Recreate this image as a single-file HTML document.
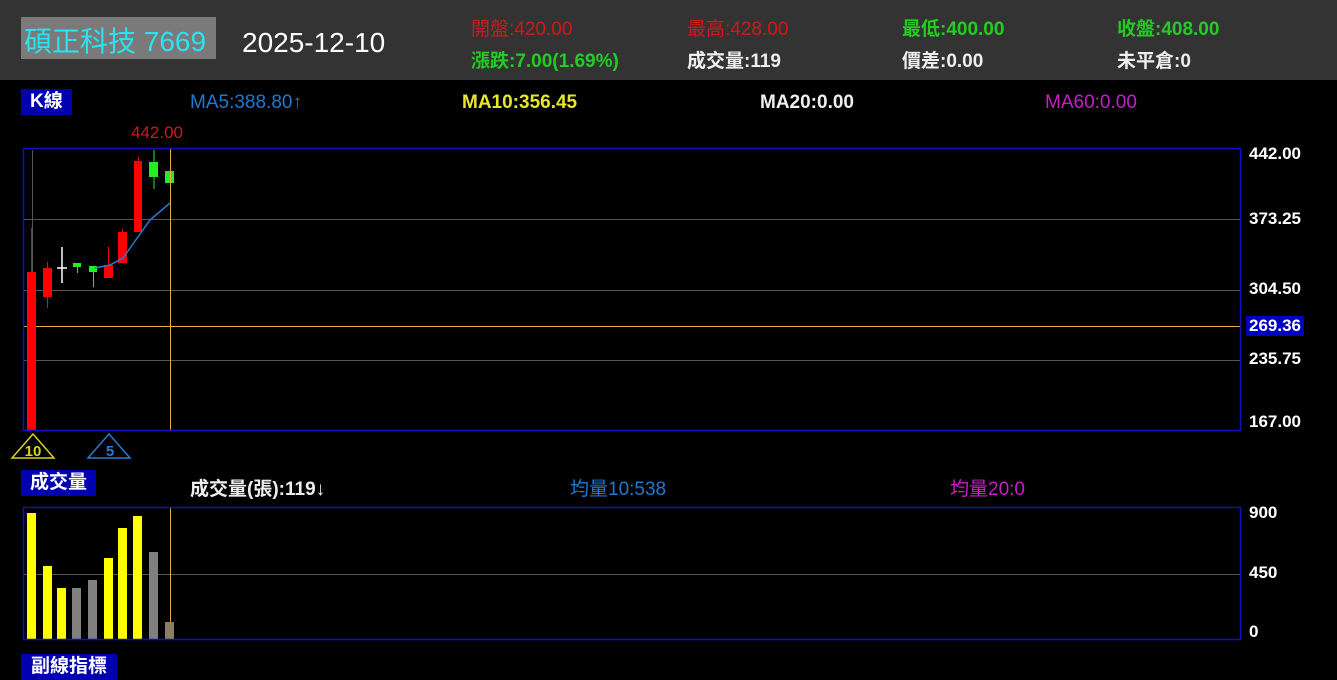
<!DOCTYPE html>
<html><head><meta charset="utf-8"><style>
body{margin:0;width:1337px;height:662px;background:#000;overflow:hidden;position:relative;font-family:"Liberation Sans","Noto Sans CJK TC",sans-serif}
.a{position:absolute;white-space:nowrap}
.hdr{position:absolute;left:0;top:0;width:1337px;height:80px;background:#333}
.s{font-size:19px}
.b{font-weight:bold}
.lab{position:absolute;background:#0000b0;color:#fff;font-size:19px;font-weight:bold;line-height:26px;padding:0 9px}
.ax{color:#fff;font-size:17px;font-weight:bold}
</style></head><body>
<div class="hdr"></div>
<div class="a" style="left:21px;top:17px;width:195px;height:42px;background:#7a7a7a"></div>
<div class="a" style="left:24px;top:24px;font-size:28px;color:#29e3f0;line-height:36px">碩正科技 7669</div>
<div class="a" style="left:242px;top:25px;font-size:28px;color:#fff;line-height:36px">2025-12-10</div>
<div class="a s" style="left:471px;top:14px;color:#d01818">開盤:420.00</div>
<div class="a s" style="left:687px;top:14px;color:#d01818">最高:428.00</div>
<div class="a s b" style="left:902px;top:14px;color:#22cc22">最低:400.00</div>
<div class="a s b" style="left:1117px;top:14px;color:#22cc22">收盤:408.00</div>
<div class="a s b" style="left:471px;top:46px;color:#22cc22">漲跌:7.00(1.69%)</div>
<div class="a s b" style="left:687px;top:46px;color:#eee">成交量:119</div>
<div class="a s b" style="left:902px;top:46px;color:#eee">價差:0.00</div>
<div class="a s b" style="left:1117px;top:46px;color:#eee">未平倉:0</div>
<div class="lab" style="left:21px;top:89px">K線</div>
<div class="a s" style="left:190px;top:92px;color:#1e7ad0">MA5:388.80↑</div>
<div class="a s b" style="left:462px;top:92px;color:#e6e62a">MA10:356.45</div>
<div class="a s b" style="left:760px;top:92px;color:#eee">MA20:0.00</div>
<div class="a s" style="left:1045px;top:92px;color:#c81ec8">MA60:0.00</div>
<div class="a" style="left:131px;top:123px;font-size:17px;color:#d01818">442.00</div>
<div class="lab" style="left:21px;top:470px">成交量</div>
<div class="a s b" style="left:190px;top:474px;color:#eee">成交量(張):119↓</div>
<div class="a s" style="left:570px;top:474px;color:#1e7ad0">均量10:538</div>
<div class="a s" style="left:950px;top:474px;color:#c81ec8">均量20:0</div>
<div class="lab" style="left:21px;top:654px;padding:0 10px">副線指標</div>
<div class="a ax" style="left:1249px;top:144px">442.00</div>
<div class="a ax" style="left:1249px;top:209px">373.25</div>
<div class="a ax" style="left:1249px;top:279px">304.50</div>
<div class="a ax" style="left:1246px;top:316px;background:#0000c0;padding:0 3px">269.36</div>
<div class="a ax" style="left:1249px;top:349px">235.75</div>
<div class="a ax" style="left:1249px;top:412px">167.00</div>
<div class="a ax" style="left:1249px;top:503px">900</div>
<div class="a ax" style="left:1249px;top:563px">450</div>
<div class="a ax" style="left:1249px;top:622px">0</div>
<svg class="a" style="left:0;top:0" width="1337" height="662">
<g stroke="#555" stroke-width="1">
<line x1="24" y1="219.5" x2="1240" y2="219.5"/><line x1="24" y1="290.5" x2="1240" y2="290.5"/><line x1="24" y1="360.5" x2="1240" y2="360.5"/>
<line x1="24" y1="574.5" x2="1240" y2="574.5"/><line x1="32.5" y1="150" x2="32.5" y2="428"/>
</g>
<line x1="24" y1="326.5" x2="1240" y2="326.5" stroke="#f0b030"/>
<g fill="#ff0000" stroke="#ff0000">
<line x1="31.5" y1="228" x2="31.5" y2="272"/><rect x="27" y="272" width="9" height="158" stroke="none"/>
<line x1="47.5" y1="262" x2="47.5" y2="308"/><rect x="43" y="268" width="9" height="29" stroke="none"/>
<line x1="108.5" y1="247" x2="108.5" y2="265"/><rect x="104" y="265" width="9" height="13" stroke="none"/>
<line x1="122.5" y1="229" x2="122.5" y2="232"/><rect x="118" y="232" width="9" height="31" stroke="none"/>
<line x1="138.5" y1="157" x2="138.5" y2="161"/><rect x="134" y="161" width="8" height="71" stroke="none"/>
</g>
<g stroke="#fff" stroke-width="1.5"><line x1="62" y1="247" x2="62" y2="283"/><line x1="57" y1="268" x2="67" y2="268"/></g>
<g fill="#22ee22" stroke="#22ee22">
<line x1="77.5" y1="263" x2="77.5" y2="273"/><rect x="73" y="263" width="8" height="4" stroke="none"/>
<line x1="93.5" y1="266" x2="93.5" y2="287"/><rect x="89" y="266" width="8" height="6" stroke="none"/>
<line x1="154" y1="150" x2="154" y2="189"/><rect x="149" y="162" width="9" height="15" stroke="none"/>
<rect x="165" y="171" width="9" height="12" stroke="none"/>
</g>
<polyline points="95,268 110,265 123,258 150,220 170,203" fill="none" stroke="#2a7ad0" stroke-width="1.5"/>
<line x1="170.5" y1="148" x2="170.5" y2="430" stroke="#e0b040"/>
<line x1="170.5" y1="507" x2="170.5" y2="639" stroke="#e0b040"/>
<rect x="23.5" y="148.5" width="1217" height="282" fill="none" stroke="#1010c0" stroke-width="1.5"/>
<g fill="#ffff00">
<rect x="27" y="513" width="9" height="126"/><rect x="43" y="566" width="9" height="73"/><rect x="57" y="588" width="9" height="51"/>
<rect x="104" y="558" width="9" height="81"/><rect x="118" y="528" width="9" height="111"/><rect x="133" y="516" width="9" height="123"/>
</g>
<g fill="#808080"><rect x="72" y="588" width="9" height="51"/><rect x="88" y="580" width="9" height="59"/><rect x="149" y="552" width="9" height="87"/></g>
<rect x="165" y="622" width="9" height="17" fill="#8a8060"/>
<rect x="23.5" y="507.5" width="1217" height="132" fill="none" stroke="#1010c0" stroke-width="1.5"/>
<polygon points="33,434 54,458 12,458" fill="none" stroke="#d8d020" stroke-width="1.5"/>
<text x="33" y="456" fill="#d8d020" font-size="15" font-weight="bold" text-anchor="middle" font-family="Liberation Sans">10</text>
<polygon points="109,434 130,458 88,458" fill="none" stroke="#2a7ad0" stroke-width="1.5"/>
<text x="110" y="456" fill="#2a7ad0" font-size="15" font-weight="bold" text-anchor="middle" font-family="Liberation Sans">5</text>
</svg>
</body></html>
